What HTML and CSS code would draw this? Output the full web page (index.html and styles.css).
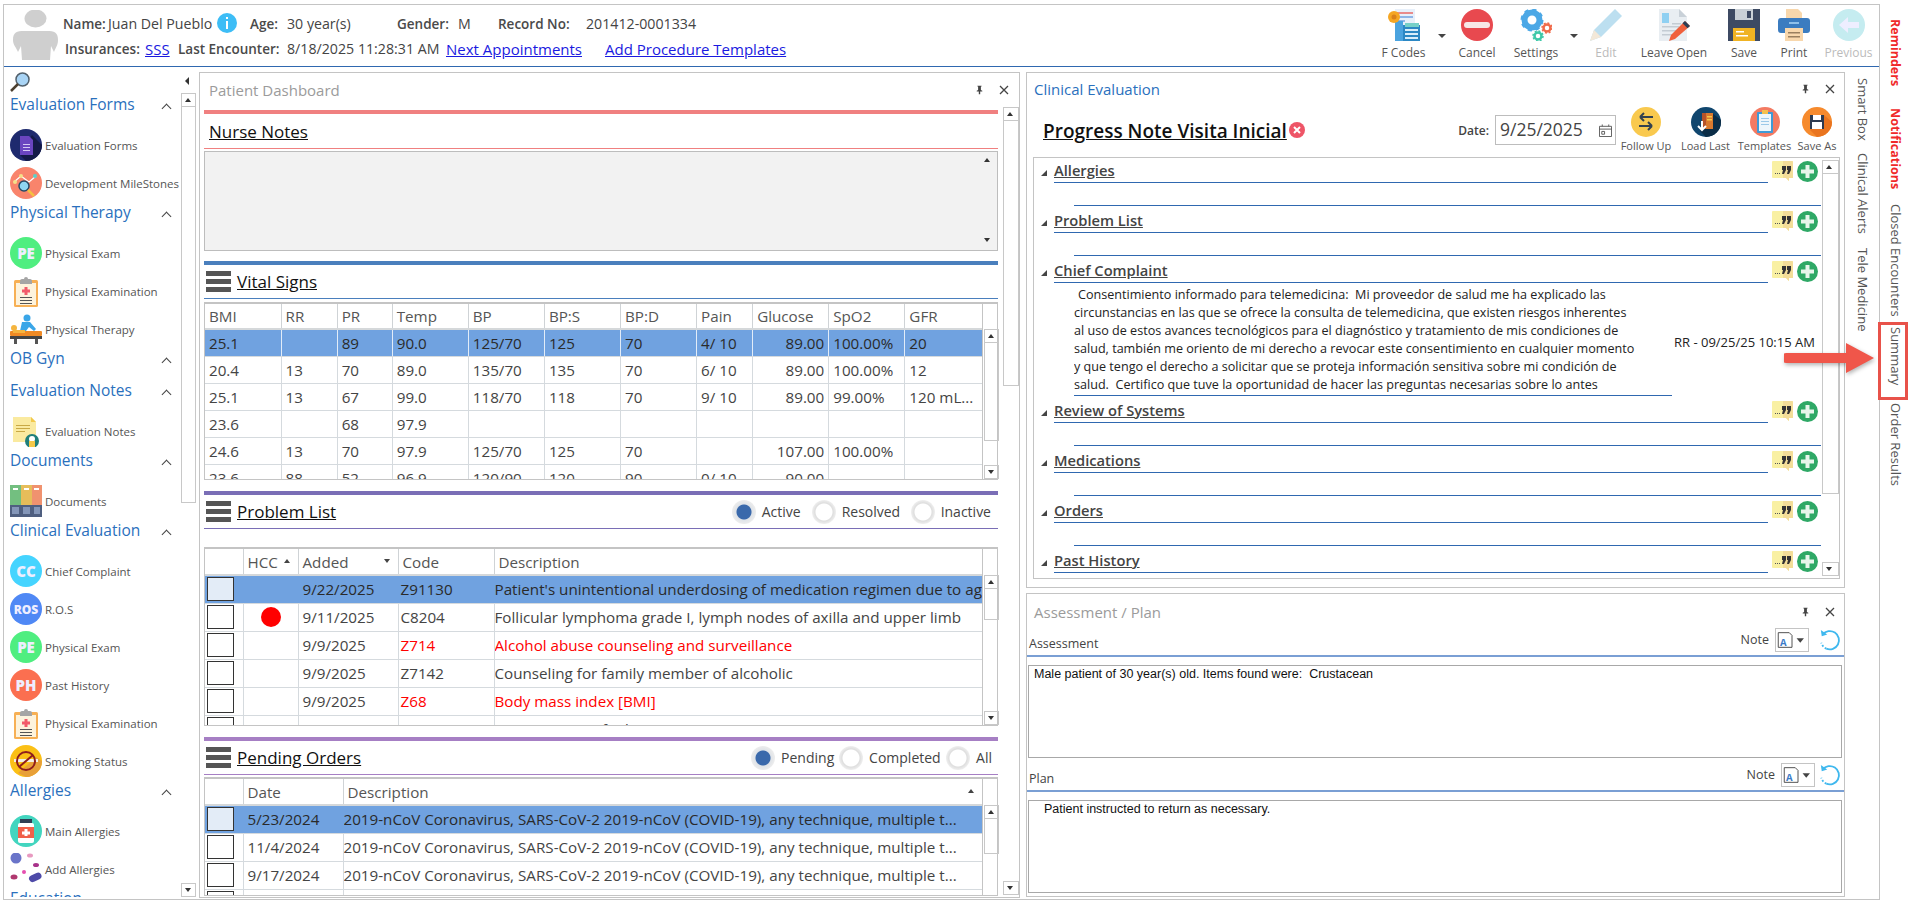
FILE: index.html
```html
<!DOCTYPE html>
<html lang="en">
<head>
<meta charset="utf-8">
<title>Clinical Evaluation</title>
<link rel="stylesheet" href="styles.css">
</head>
<body>
<svg class="defs" width="0" height="0" aria-hidden="true">
  <symbol id="burger" viewBox="0 0 25 21"><rect y="0" width="25" height="5" fill="#555"/><rect y="8" width="25" height="5" fill="#555"/><rect y="16" width="25" height="5" fill="#555"/></symbol>
  <symbol id="quote" viewBox="0 0 21 21"><path d="M0 1a1 1 0 0 1 1-1h19a1 1 0 0 1 1 1v16h-4v3l-3-3H1a1 1 0 0 1-1-1z" fill="#f9f0a3"/><path d="M11 0h9a1 1 0 0 1 1 1v16h-4v3l-3-3h-3z" fill="#f3dd98"/><path d="M3 12h1v1H3zm2 0h1v1H5zm2 0h1v1H7z" fill="#555"/><path d="M10 5h4v4l-2 4h-2l1-4h-1zM15 5h4v4l-2 4h-2l1-4h-1z" fill="#333"/></symbol>
  <symbol id="plus" viewBox="0 0 21 21"><circle cx="10.5" cy="10.5" r="10.5" fill="#2fa866"/><path d="M8.5 4h4v4.500H17v4h-4.500V17h-4v-4.500H4v-4h4.500z" fill="#e8f5ec"/></symbol>
  <symbol id="pin" viewBox="0 0 10 12"><path d="M2 0h6v1H7v5l2 1v1H6v4H4V8H1V7l2-1V1H2z" fill="#444"/></symbol>
  <symbol id="close" viewBox="0 0 10 10"><path d="M1 1l8 8M9 1L1 9" stroke="#444" stroke-width="1.300" fill="none"/></symbol>
  <symbol id="clipboard" viewBox="0 0 32 32"><rect x="4" y="5" width="24" height="27" rx="1.500" fill="#f7b055"/><rect x="6" y="8" width="20" height="22" fill="#fdf3dd"/><path d="M10 6a2 2 0 0 1 2-2h2a2 2 0 0 1 4 0h2a2 2 0 0 1 2 2v3H10z" fill="#a5a5a5"/><path d="M14.500 12h3v2.500H20v3h-2.500V20h-3v-2.500H12v-3h2.500z" fill="#f25b6a"/><path d="M10 22h12v1H10zm0 3h12v1H10zm0 3h12v1H10z" fill="#555"/></symbol>
  <symbol id="noteA" viewBox="0 0 34 24"><path d="M2 4h12l3 3v13H2z" fill="#fff" stroke="#444"/><text x="4" y="18" class="note-a">A</text><path d="M22 10h8l-4 5z" fill="#444"/></symbol>
  <symbol id="refresh" viewBox="0 0 24 24"><path d="M4 6A10 10 0 1 1 8 21.500" fill="none" stroke="#3fb8ee" stroke-width="2"/><path d="M8 21.500A10 10 0 0 1 2.500 15" fill="none" stroke="#3fb8ee" stroke-width="2" stroke-dasharray="2 2"/><path d="M2 1l1 7 6-2z" fill="#3fb8ee"/></symbol>
</svg>
<div class="app">
  <div class="main">
    <header class="head">
      <svg class="avatar" viewBox="0 0 45 50"><ellipse cx="22.500" cy="8.500" rx="11" ry="9" fill="#cfcfcf"/><path d="M0 30c0-8 4-9 11-9h23c7 0 11 1 11 9 0 5-2 7-4 12l-3-6-1 14H9L8 36l-3 6c-2-5-5-7-5-12z" fill="#cfcfcf"/></svg>
      <div class="demo">
        <div class="demo-row">
          <b class="f w45">Name:</b><span class="f w109">Juan Del Pueblo</span>
          <svg class="info" viewBox="0 0 20 20"><circle cx="10" cy="10" r="10" fill="#3dbdf6"/><rect x="9" y="8" width="2" height="8" fill="#fff"/><rect x="9" y="4" width="2" height="2" fill="#fff"/></svg>
          <b class="f w37 ml13">Age:</b><span class="f w110">30 year(s)</span>
          <b class="f w61">Gender:</b><span class="f w40">M</span>
          <b class="f w88">Record No:</b><span class="f">201412-0001334</span>
        </div>
        <div class="demo-row row2">
          <b class="f w80">Insurances:</b><a class="f w33" href="#">SSS</a>
          <b class="f w109">Last Encounter:</b><span class="f w159">8/18/2025 11:28:31 AM</span>
          <a class="f w159" href="#">Next Appointments</a><a class="f" href="#">Add Procedure Templates</a>
        </div>
      </div>
      <nav class="tools">
        <div class="tool w65"><svg viewBox="0 0 32 32"><rect x="7" y="0" width="20" height="26" fill="#e8f0fa"/><path d="M9 3h16v2H9z" fill="#e98b8b"/><path d="M9 7h16v2H9zm0 4h8v2H9z" fill="#8fb6e8"/><rect x="7" y="12" width="8" height="20" fill="#4aa3df"/><rect x="15" y="16" width="17" height="16" fill="#2c88c4"/><rect x="17" y="14" width="14" height="4" fill="#76d0c8"/><path d="M17 20h13v2H17zm0 4h13v2H17zm0 4h13v2H17z" fill="#d8eefb"/><circle cx="6" cy="8" r="6" fill="#f5a623"/><circle cx="6" cy="8" r="2.500" fill="#d9801b"/></svg><span>F Codes</span></div>
        <div class="caret-slot w12"><i class="caret"></i></div>
        <div class="tool w58"><svg viewBox="0 0 32 32"><circle cx="16" cy="16" r="16" fill="#e8494f"/><rect x="3" y="13" width="26" height="6" rx="3" fill="#f7e7e7"/></svg><span>Cancel</span></div>
        <div class="tool w60"><svg viewBox="0 0 32 32"><circle cx="12" cy="11" r="7.500" fill="none" stroke="#4ca8e6" stroke-width="6"/><circle cx="12" cy="11" r="10" fill="none" stroke="#4ca8e6" stroke-width="3" stroke-dasharray="4 3.850"/><circle cx="27" cy="19" r="3.500" fill="none" stroke="#f06a4a" stroke-width="2.500"/><circle cx="27" cy="19" r="5" fill="none" stroke="#f06a4a" stroke-width="1.500" stroke-dasharray="2 1.900"/><circle cx="18" cy="27" r="3.500" fill="none" stroke="#3ec8a8" stroke-width="2.500"/><circle cx="18" cy="27" r="5" fill="none" stroke="#3ec8a8" stroke-width="1.500" stroke-dasharray="2 1.900"/></svg><span>Settings</span></div>
        <div class="caret-slot w16"><i class="caret"></i></div>
        <div class="tool w48 off"><svg viewBox="0 0 32 32"><path d="M25 0l7 7L11 28 0 32l4-11z" fill="#bcdff0"/><path d="M4 21l7 7-11 4z" fill="#f3e8d8"/></svg><span>Edit</span></div>
        <div class="tool w88"><svg viewBox="0 0 32 32"><path d="M1 0h20l8 8v24H1z" fill="#e9eef2"/><path d="M21 0l8 8h-8z" fill="#c9d1d8"/><rect x="4" y="4" width="7" height="10" fill="#8fd0f2"/><path d="M4 17h17v1.500H4zm0 4h14v1.500H4zm0 4h10v1.500H4zm10-11h9v1.500h-9z" fill="#c4ccd3"/><path d="M27 12l5 5-15 13-6 2 2-6z" fill="#f0603c"/><path d="M27 12l5 5-2.500 2.200-5-5z" fill="#2e3f55"/></svg><span>Leave Open</span></div>
        <div class="tool w52"><svg viewBox="0 0 32 32"><path d="M0 0h32v32H0z" fill="#3d4a63"/><rect x="7" y="0" width="18" height="11" fill="#c9d0d6"/><rect x="19" y="2" width="4" height="7" fill="#3d4a63"/><rect x="5" y="19" width="22" height="13" fill="#f0b323"/><path d="M8 22h8v1.500H8zm0 4h12v1.500H8z" fill="#fff"/></svg><span>Save</span></div>
        <div class="tool w48"><svg viewBox="0 0 32 32"><path d="M8 0h12l4 4v10H8z" fill="#f8d7ac"/><rect x="0" y="9" width="32" height="15" rx="3" fill="#3b7cc0"/><rect x="11" y="13" width="10" height="2" fill="#8fc0ea"/><rect x="7" y="19" width="18" height="13" fill="#f8d7ac"/><path d="M10 23h12v1.500H10zm0 4h12v1.500H10z" fill="#9a7f5f"/></svg><span>Print</span></div>
        <div class="tool w61 off"><svg viewBox="0 0 32 32"><circle cx="16" cy="16" r="16" fill="#c5ecf0"/><path d="M6 16l9-8v5h11v6H15v5z" fill="#eef" /></svg><span>Previous</span></div>
      </nav>
    </header>
    <div class="body">
      <aside class="side">
        <div class="side-list">
          <div class="search"><svg viewBox="0 0 20 20"><circle cx="12.500" cy="7.500" r="6.500" fill="#a9d4f5" stroke="#52616d" stroke-width="1.500"/><path d="M8 12l-7 7" stroke="#4d4030" stroke-width="2.500"/></svg></div>
          <section class="side-sec"><h3>Evaluation Forms</h3><ul>
            <li><svg viewBox="0 0 32 32"><circle cx="16" cy="16" r="16" fill="#1e2a6e"/><path d="M16 32a16 16 0 0 0 16-16L22 6 10 26z" fill="#141a48"/><path d="M10 7h9l4 4v15H10z" fill="#6a45c0"/><path d="M13 15h7v1h-7zm0 3h7v1h-7zm0 3h7v1h-7z" fill="#d5c9f3"/></svg>Evaluation Forms</li>
            <li><svg viewBox="0 0 32 32"><circle cx="16" cy="16" r="16" fill="#f9846c"/><path d="M4 15l7-6 8 6 7-6" fill="none" stroke="#fff" stroke-width="1.200"/><circle cx="5" cy="15" r="2" fill="#f5e08a"/><circle cx="11" cy="9" r="2" fill="#f5e08a"/><circle cx="25" cy="9" r="2" fill="#5bd0c8"/><circle cx="14" cy="19" r="5" fill="#8fd6f2" stroke="#274a66" stroke-width="1.500"/><path d="M18 23l6 6" stroke="#f5c043" stroke-width="2.500"/></svg>Development MileStones</li>
          </ul></section>
          <section class="side-sec"><h3>Physical Therapy</h3><ul>
            <li><span class="badge pe">PE</span>Physical Exam</li>
            <li><svg><use href="#clipboard"/></svg>Physical Examination</li>
            <li><svg viewBox="0 0 32 32"><circle cx="17" cy="5" r="3.500" fill="#3aa6e8"/><path d="M12 9h8l6 7-2 2-5-4-3 4h-6z" fill="#3aa6e8"/><rect x="0" y="18" width="32" height="5" rx="1" fill="#f08a24"/><circle cx="4" cy="15" r="3" fill="#f5b53f"/><path d="M3 17h12v3H3z" fill="#f5b53f"/><rect x="0" y="23" width="32" height="3" fill="#444"/><path d="M4 26h3v5H4zm21 0h3v5h-3z" fill="#555"/></svg>Physical Therapy</li>
          </ul></section>
          <section class="side-sec"><h3>OB Gyn</h3></section>
          <section class="side-sec"><h3>Evaluation Notes</h3><ul>
            <li><svg viewBox="0 0 32 32"><path d="M3 2h18l5 5v20H3z" fill="#faeaa0"/><path d="M21 2l5 5h-5z" fill="#f2c84b"/><path d="M6 10h14v1H6zm0 3h14v1H6zm0 3h9v1H6z" fill="#c9a945"/><circle cx="22" cy="26" r="7" fill="#1f7f7a"/><circle cx="22" cy="24" r="3" fill="#fff"/><rect x="19" y="26" width="6" height="6" fill="#f5c94a"/></svg>Evaluation Notes</li>
          </ul></section>
          <section class="side-sec"><h3>Documents</h3><ul>
            <li><svg viewBox="0 0 32 32"><rect x="0" y="0" width="11" height="32" fill="#73bf80"/><rect x="11" y="0" width="11" height="32" fill="#e6bd5a"/><rect x="22" y="0" width="10" height="32" fill="#f0926f"/><rect x="0" y="20" width="32" height="12" fill="#4f5f80"/><path d="M2 22h7v7H2zm11 0h7v7h-7zm11 0h6v7h-6z" fill="#8496b8"/><path d="M3 3h5v2H3zm11 0h5v2h-5zm10 0h5v2h-5z" fill="#fff"/></svg>Documents</li>
          </ul></section>
          <section class="side-sec"><h3>Clinical Evaluation</h3><ul>
            <li><span class="badge cc">CC</span>Chief Complaint</li>
            <li><span class="badge ros">ROS</span>R.O.S</li>
            <li><span class="badge pe">PE</span>Physical Exam</li>
            <li><span class="badge ph">PH</span>Past History</li>
            <li><svg><use href="#clipboard"/></svg>Physical Examination</li>
            <li><svg viewBox="0 0 32 32"><circle cx="16" cy="16" r="16" fill="#fbc016"/><path d="M16 32A16 16 0 0 0 32 16l-6-4-18 16z" fill="#e8a038"/><rect x="4" y="14" width="24" height="3" fill="#f4f0e6"/><circle cx="16" cy="16" r="9" fill="none" stroke="#8f1d1d" stroke-width="2"/><path d="M9 22L23 10" stroke="#8f1d1d" stroke-width="2"/></svg>Smoking Status</li>
          </ul></section>
          <section class="side-sec"><h3>Allergies</h3><ul>
            <li><svg viewBox="0 0 32 32"><circle cx="16" cy="16" r="16" fill="#42d5bf"/><rect x="10" y="4" width="12" height="4" fill="#2e3f55"/><rect x="8" y="8" width="16" height="20" rx="2" fill="#fff"/><rect x="8" y="12" width="16" height="11" fill="#f0604a"/><path d="M14.500 14h3v2.500H20v3h-2.500V21h-3v-1.500H12v-3h2.500z" fill="#fff"/></svg>Main Allergies</li>
            <li><svg viewBox="0 0 32 32"><circle cx="6" cy="5" r="5.500" fill="#6a74c9"/><ellipse cx="20" cy="2.500" rx="3" ry="2" fill="#e89ac0"/><ellipse cx="26" cy="12" rx="3" ry="2" fill="#a8328a"/><circle cx="14" cy="19" r="2" fill="#e64fb0"/><ellipse cx="4" cy="24" rx="3.500" ry="2.500" fill="#b0386f"/><rect x="19" y="21" width="13" height="7" rx="3.500" fill="#4e4aa8" transform="rotate(-25 25 25)"/></svg>Add Allergies</li>
          </ul></section>
          <section class="side-sec"><h3>Education</h3></section>
        </div>
        <div class="side-rail">
          <div class="collapse"><i></i></div>
          <div class="vs vs-side"><i class="vs-up"></i><i class="vs-thumb t-side"></i><i class="vs-rest"></i><i class="vs-down"></i></div>
        </div>
      </aside>

      <section class="panel dash">
        <div class="panel-title"><span class="muted">Patient Dashboard</span><svg class="pin"><use href="#pin"/></svg><svg class="close"><use href="#close"/></svg></div>
        <div class="dash-body">
          <div class="dash-main">
            <div class="bar coral"></div>
            <div class="sec-head l-coral"><h2 class="plain">Nurse Notes</h2></div>
            <div class="nurse"><div class="vs vs-flat"><i class="vs-up"></i><i class="vs-rest"></i><i class="vs-down"></i></div></div>

            <div class="bar blue mt10"></div>
            <div class="sec-head l-blue"><svg class="burger"><use href="#burger"/></svg><h2>Vital Signs</h2></div>
            <div class="grid g-vital">
              <div class="grid-clip">
              <table class="t t-vital">
                <colgroup><col class="c76"><col class="c56"><col class="c55"><col class="c76"><col class="c76"><col class="c76"><col class="c76"><col class="c56"><col class="c76"><col class="c76"><col class="c77"></colgroup>
                <thead><tr><th>BMI</th><th>RR</th><th>PR</th><th>Temp</th><th>BP</th><th>BP:S</th><th>BP:D</th><th>Pain</th><th>Glucose</th><th>SpO2</th><th>GFR</th></tr></thead>
                <tbody>
                  <tr class="sel"><td>25.1</td><td></td><td>89</td><td>90.0</td><td>125/70</td><td>125</td><td>70</td><td>4/ 10</td><td class="r">89.00</td><td>100.00%</td><td>20</td></tr>
                  <tr><td>20.4</td><td>13</td><td>70</td><td>89.0</td><td>135/70</td><td>135</td><td>70</td><td>6/ 10</td><td class="r">89.00</td><td>100.00%</td><td>12</td></tr>
                  <tr><td>25.1</td><td>13</td><td>67</td><td>99.0</td><td>118/70</td><td>118</td><td>70</td><td>9/ 10</td><td class="r">89.00</td><td>99.00%</td><td>120 mL...</td></tr>
                  <tr><td>23.6</td><td></td><td>68</td><td>97.9</td><td></td><td></td><td></td><td></td><td></td><td></td><td></td></tr>
                  <tr><td>24.6</td><td>13</td><td>70</td><td>97.9</td><td>125/70</td><td>125</td><td>70</td><td></td><td class="r">107.00</td><td>100.00%</td><td></td></tr>
                  <tr><td>23.6</td><td>88</td><td>52</td><td>96.9</td><td>120/90</td><td>120</td><td>90</td><td>0/ 10</td><td class="r">90.00</td><td></td><td></td></tr>
                </tbody>
              </table>
              </div>
              <div class="grid-side h26"><div class="vs"><i class="vs-up"></i><i class="vs-thumb t-vital-th"></i><i class="vs-rest"></i><i class="vs-down"></i></div></div>
            </div>

            <div class="bar purple mt11"></div>
            <div class="sec-head l-purple"><svg class="burger"><use href="#burger"/></svg><h2>Problem List</h2>
              <div class="radios r-problem"><label class="radio on w80">Active</label><label class="radio w99">Resolved</label><label class="radio">Inactive</label></div>
            </div>
            <div class="grid g-problem">
              <div class="grid-clip">
              <table class="t t-rows">
                <colgroup><col class="c38"><col class="c55"><col class="c100"><col class="c96"><col class="c488"></colgroup>
                <thead><tr><th></th><th>HCC<i class="sort up"></i></th><th>Added<i class="sort down"></i></th><th>Code</th><th>Description</th></tr></thead>
                <tbody>
                  <tr class="sel"><td class="chk"><i></i></td><td></td><td>9/22/2025</td><td>Z91130</td><td class="nw">Patient's unintentional underdosing of medication regimen due to age-related debility</td></tr>
                  <tr><td class="chk"><i></i></td><td class="dot-cell"><i class="dot"></i></td><td>9/11/2025</td><td>C8204</td><td class="nw">Follicular lymphoma grade I, lymph nodes of axilla and upper limb</td></tr>
                  <tr><td class="chk"><i></i></td><td></td><td>9/9/2025</td><td class="red">Z714</td><td class="nw red">Alcohol abuse counseling and surveillance</td></tr>
                  <tr><td class="chk"><i></i></td><td></td><td>9/9/2025</td><td>Z7142</td><td class="nw">Counseling for family member of alcoholic</td></tr>
                  <tr><td class="chk"><i></i></td><td></td><td>9/9/2025</td><td class="red">Z68</td><td class="nw red">Body mass index [BMI]</td></tr>
                  <tr><td class="chk"><i></i></td><td></td><td>9/4/2025</td><td>R509</td><td class="nw">"Fever, unspecified"</td></tr>
                </tbody>
              </table>
              </div>
              <div class="grid-side h27"><div class="vs"><i class="vs-up"></i><i class="vs-thumb t-small"></i><i class="vs-rest"></i><i class="vs-down"></i></div></div>
            </div>

            <div class="bar violet mt11"></div>
            <div class="sec-head l-violet"><svg class="burger"><use href="#burger"/></svg><h2>Pending Orders</h2>
              <div class="radios r-orders"><label class="radio on w88">Pending</label><label class="radio w107">Completed</label><label class="radio">All</label></div>
            </div>
            <div class="grid g-orders">
              <div class="grid-clip">
              <table class="t t-rows">
                <colgroup><col class="c38"><col class="c100"><col class="c639"></colgroup>
                <thead><tr><th></th><th>Date</th><th>Description<i class="sort up"></i></th></tr></thead>
                <tbody>
                  <tr class="sel"><td class="chk"><i></i></td><td>5/23/2024</td><td class="nw">2019-nCoV Coronavirus, SARS-CoV-2 2019-nCoV (COVID-19), any technique, multiple t...</td></tr>
                  <tr><td class="chk"><i></i></td><td>11/4/2024</td><td class="nw">2019-nCoV Coronavirus, SARS-CoV-2 2019-nCoV (COVID-19), any technique, multiple t...</td></tr>
                  <tr><td class="chk"><i></i></td><td>9/17/2024</td><td class="nw">2019-nCoV Coronavirus, SARS-CoV-2 2019-nCoV (COVID-19), any technique, multiple t...</td></tr>
                  <tr><td class="chk"><i></i></td><td></td><td></td></tr>
                </tbody>
              </table>
              </div>
              <div class="grid-side h27"><div class="vs"><i class="vs-up"></i><i class="vs-thumb t-order"></i><i class="vs-rest"></i></div></div>
            </div>
          </div>
          <div class="vs vs-outer"><i class="vs-up"></i><i class="vs-thumb t-outer"></i><i class="vs-rest"></i><i class="vs-down"></i></div>
        </div>
      </section>

      <div class="right-col">
        <section class="panel clinical">
          <div class="panel-title pt-clin"><span class="blue-t">Clinical Evaluation</span><svg class="pin"><use href="#pin"/></svg><svg class="close"><use href="#close"/></svg></div>
          <div class="clin-tools">
            <h1>Progress Note Visita Inicial</h1>
            <svg class="x-c" viewBox="0 0 16 16"><circle cx="8" cy="8" r="8" fill="#ee5567"/><path d="M5 5l6 6M11 5l-6 6" stroke="#fff" stroke-width="2"/></svg>
            <b class="date-l">Date:</b>
            <div class="date"><span>9/25/2025</span><svg viewBox="0 0 14 14"><path d="M.5 2.500h13v11H.5zM.5 5.500h13M3.500.500v2M10.500.500v2M3 8h3v3H3z" fill="none" stroke="#555"/></svg></div>
            <div class="ctool w60"><svg viewBox="0 0 30 30"><circle cx="15" cy="15" r="15" fill="#f9c94e"/><path d="M9 10h13M9 10l4-4M9 10l4 4M21 19H8M21 19l-4-4M21 19l-4 4" fill="none" stroke="#33414f" stroke-width="2"/></svg><span>Follow Up</span></div>
            <div class="ctool w59"><svg viewBox="0 0 30 30"><circle cx="15" cy="15" r="15" fill="#10466e"/><path d="M30 15a15 15 0 0 1-15 15l-6-6 12-18 9 7z" fill="#0b2d47"/><rect x="11" y="6" width="11" height="16" fill="#b5532a"/><rect x="15" y="6" width="7" height="16" fill="#d9792f"/><path d="M16 9h5v1.500h-5zm0 3h5v1.500h-5z" fill="#f5c74a"/><path d="M11 14v8M7 19l4 4 4-4" fill="none" stroke="#fff" stroke-width="2"/></svg><span>Load Last</span></div>
            <div class="ctool w59"><svg viewBox="0 0 30 30"><circle cx="15" cy="15" r="15" fill="#f37a62"/><rect x="7" y="5" width="16" height="21" rx="1" fill="#3f9ad6"/><rect x="9" y="7" width="12" height="17" fill="#eef6fb"/><rect x="12" y="3" width="6" height="4" fill="#f4c04e"/><path d="M11 11h8v1h-8zm0 3h8v1h-8zm0 3h8v1h-8z" fill="#9cc9e8"/></svg><span>Templates</span></div>
            <div class="ctool w46"><svg viewBox="0 0 30 30"><circle cx="15" cy="15" r="15" fill="#f68a2d"/><path d="M30 15a15 15 0 0 1-15 15l-7-7 14-15 8 7z" fill="#e9741f"/><rect x="8" y="8" width="14" height="14" fill="#2d3a4f"/><rect x="11" y="8" width="8" height="5" fill="#fff"/><rect x="10" y="15" width="10" height="7" fill="#fff"/></svg><span>Save As</span></div>
          </div>
          <div class="eval">
            <div class="eval-list">
              <div class="es"><div class="es-head"><i class="tri"></i><h4>Allergies</h4><svg class="q"><use href="#quote"/></svg><svg class="p"><use href="#plus"/></svg></div><div class="es-body"></div></div>
              <div class="es"><div class="es-head"><i class="tri"></i><h4>Problem List</h4><svg class="q"><use href="#quote"/></svg><svg class="p"><use href="#plus"/></svg></div><div class="es-body"></div></div>
              <div class="es"><div class="es-head"><i class="tri"></i><h4>Chief Complaint</h4><svg class="q"><use href="#quote"/></svg><svg class="p"><use href="#plus"/></svg></div>
                <div class="es-text">
                  <p><span class="lead">Consentimiento informado para telemedicina:&nbsp; Mi proveedor de salud me ha explicado las</span><br>circunstancias en las que se ofrece la consulta de telemedicina, que existen riesgos inherentes<br>al uso de estos avances tecnológicos para el diagnóstico y tratamiento de mis condiciones de<br>salud, también me oriento de mi derecho a revocar este consentimiento en cualquier momento<br>y que tengo el derecho a solicitar que se proteja información sensitiva sobre mi condición de<br>salud.&nbsp; Certifico que tuve la oportunidad de hacer las preguntas necesarias sobre lo antes</p>
                  <span class="rr">RR - 09/25/25 10:15 AM</span>
                </div></div>
              <div class="es"><div class="es-head"><i class="tri"></i><h4>Review of Systems</h4><svg class="q"><use href="#quote"/></svg><svg class="p"><use href="#plus"/></svg></div><div class="es-body"></div></div>
              <div class="es"><div class="es-head"><i class="tri"></i><h4>Medications</h4><svg class="q"><use href="#quote"/></svg><svg class="p"><use href="#plus"/></svg></div><div class="es-body"></div></div>
              <div class="es"><div class="es-head"><i class="tri"></i><h4>Orders</h4><svg class="q"><use href="#quote"/></svg><svg class="p"><use href="#plus"/></svg></div><div class="es-body"></div></div>
              <div class="es"><div class="es-head"><i class="tri"></i><h4>Past History</h4><svg class="q"><use href="#quote"/></svg><svg class="p"><use href="#plus"/></svg></div></div>
            </div>
            <div class="vs vs-eval"><i class="vs-up"></i><i class="vs-thumb t-eval"></i><i class="vs-rest"></i><i class="vs-down"></i></div>
          </div>
        </section>
        <section class="panel assess">
          <div class="panel-title pt-assess"><span class="muted">Assessment / Plan</span><svg class="pin"><use href="#pin"/></svg><svg class="close"><use href="#close"/></svg></div>
          <div class="ap-head"><span class="ap-l">Assessment</span><span class="note-l">Note</span><svg class="note-b"><use href="#noteA"/></svg><svg class="ref r-a"><use href="#refresh"/></svg></div>
          <div class="ap-box">Male patient of 30 year(s) old. Items found were:&nbsp; Crustacean</div>
          <div class="ap-head h-plan"><span class="ap-l">Plan</span><span class="note-l">Note</span><svg class="note-b"><use href="#noteA"/></svg><svg class="ref"><use href="#refresh"/></svg></div>
          <div class="ap-box b-plan">Patient instructed to return as necessary.</div>
        </section>
      </div>

      <div class="strip">
        <span class="vt h75">Smart Box</span><span class="vt h95">Clinical Alerts</span><span class="vt">Tele Medicine</span>
      </div>
    </div>
  </div>
  <div class="tabs">
    <span class="vt alert h89">Reminders</span><span class="vt alert h96">Notifications</span><span class="vt h123">Closed Encounters</span><span class="vt h76">Summary</span><span class="vt">Order Results</span>
  </div>
  <div class="callout"></div>
  <svg class="arrow" viewBox="0 0 92 32"><path d="M2 11h60V1l28 15-28 15V21H2a5 5 0 0 1 0-10z" fill="#f0564a"/></svg>
</div>
</body>
</html>
```
FILE: styles.css
```css
* { box-sizing: border-box; }
html, body { margin: 0; padding: 0; height: 100%; overflow: hidden; background: #fff; }
body { font-family: "Open Sans", "Noto Sans", sans-serif; color: #444; font-size: 14px; }
.defs { position: absolute; }
ul { list-style: none; margin: 0; padding: 0; }
h1, h2, h3, h4, p { margin: 0; }
i { display: block; font-style: normal; }

.app { position: relative; width: 1911px; height: 902px; display: flex; padding: 4px 0 2px 3px; }
.main { width: 1877px; height: 896px; border: 1px solid #c4c4c4; display: flex; flex-direction: column; }

/* header */
.head { height: 62px; flex: none; border-bottom: 1px solid #2f68b0; display: flex; align-items: flex-start; position: relative; }
.avatar { width: 45px; height: 50px; margin: 5px 0 0 9px; flex: none; }
.demo { margin-left: 5px; padding-top: 7px; }
.demo-row { display: flex; align-items: center; height: 23px; white-space: nowrap; font-size: 14.200px; }
.demo-row b { font-weight: 600; color: #4a4a4a; font-size: 13.500px; }
.row2 { margin-top: 2px; margin-left: 2px; }
.f { display: block; flex: none; }
.demo a { color: #1a1ae0; text-decoration: underline; font-size: 15px; }
.info { width: 20px; height: 20px; flex: none; margin-top: -2px; }
.w33 { width: 33px; } .w37 { width: 37px; } .w40 { width: 40px; } .w45 { width: 45px; } .w46 { width: 46px; } .w48 { width: 48px; }
.w52 { width: 52px; } .w58 { width: 58px; } .w59 { width: 59px; } .w60 { width: 60px; } .w61 { width: 61px; } .w65 { width: 65px; }
.w80 { width: 80px; } .w88 { width: 88px; } .w109 { width: 109px; } .w110 { width: 110px; } .w159 { width: 159px; }
.w12 { width: 12px; } .w16 { width: 16px; } .w99 { width: 99px; } .w107 { width: 107px; }
.ml13 { margin-left: 13px; }
.tools { margin-left: auto; display: flex; height: 61px; }
.tool { display: flex; flex-direction: column; align-items: center; padding-top: 4px; font-size: 12px; color: #555; white-space: nowrap; }
.tool svg { width: 32px; height: 32px; flex: none; }
.tool span { margin-top: 3px; line-height: 17px; }
.tool.off { color: #bbb; }
.caret-slot { padding-top: 29px; display: flex; justify-content: center; }
.caret { width: 0; height: 0; border: 4px solid transparent; border-top: 4px solid #444; border-bottom: 0; }

/* body row */
.body { flex: 1; display: flex; min-height: 0; padding-top: 5px; }

/* sidebar */
.side { width: 195px; flex: none; display: flex; margin-top: -5px; padding-bottom: 2px; }
.side-list { width: 177px; flex: none; overflow: hidden; padding-left: 6px; }
.search { height: 22px; padding-top: 5px; }
.search svg { width: 20px; height: 20px; display: block; }
.side-sec h3 { height: 32px; line-height: 30px; font-weight: 400; font-size: 15.500px; color: #2a70bd; white-space: nowrap; position: relative; }
.side-sec h3::after { content: ""; position: absolute; left: 153px; top: 16px; width: 6px; height: 6px; border-left: 1.500px solid #444; border-top: 1.500px solid #444; transform: rotate(45deg); }
.side-sec ul { display: flex; flex-direction: column; gap: 6px; margin: 8px 0 -2px; }
.side-sec li { display: flex; align-items: center; height: 32px; font-size: 11.500px; white-space: nowrap; color: #555; }
.side-sec li svg, .badge { width: 32px; height: 32px; flex: none; margin-right: 3px; display: block; }
.badge { border-radius: 50%; color: #eef; font-weight: 800; font-size: 15px; display: flex; align-items: center; justify-content: center; }
.pe { background: #4fee80; } .cc { background: #45d4ff; } .ros { background: #4f88f5; font-size: 12px; } .ph { background: #fb6f50; }
.side-rail { width: 18px; flex: none; display: flex; flex-direction: column; }
.collapse { height: 26px; position: relative; flex: none; }
.collapse i { position: absolute; left: 4px; top: 10px; width: 0; height: 0; border: 4px solid transparent; border-right: 4px solid #333; border-left: 0; }

/* scrollbars */
.vs { width: 15px; display: flex; flex-direction: column; flex: 1; }
.vs-up, .vs-down { height: 14px; flex: none; position: relative; border: 1px solid #c8c8c8; }
.vs-up::after, .vs-down::after { content: ""; position: absolute; left: 3px; top: 4px; width: 0; height: 0; border: 3.500px solid transparent; }
.vs-up::after { border-bottom: 4px solid #333; border-top: 0; }
.vs-down::after { border-top: 4px solid #333; border-bottom: 0; }
.vs-thumb { flex: none; border: 1px solid #c8c8c8; border-top: 0; }
.vs-rest { flex: 1; }
.t-side { height: 396px; }
.t-vital-th { height: 98px; }
.t-small { height: 31px; }
.t-order { height: 35px; }
.t-outer { height: 265px; }
.t-eval { height: 320px; }
.vs-flat { margin-left: auto; flex: none; height: 100%; padding: 2px 0; }
.vs-flat .vs-up, .vs-flat .vs-down { border: 0; }

/* panels */
.panel { border: 1px solid #c4c4c4; background: #fff; display: flex; flex-direction: column; }
.panel-title { display: flex; align-items: center; font-size: 15px; position: relative; flex: none; }
.muted { color: #9b9b9b; }
.blue-t { color: #2a70bd; }
.pin { width: 7px; height: 10px; margin-left: auto; }
.close { width: 10px; height: 10px; margin-left: 16px; }

.dash { width: 821px; height: 826px; flex: none; }
.dash .panel-title { height: 37px; padding: 0 10px 4px 9px; }
.dash-body { display: flex; flex: 1; min-height: 0; padding-left: 4px; }
.dash-main { width: 794px; flex: none; }
.vs-outer { width: 16px; margin-left: 5px; padding-bottom: 2px; }
.vs-outer .vs-up { margin-top: -3px; }
.bar { height: 4px; }
.coral { background: #f08080; } .blue { background: #4a7fbd; } .purple { background: #7a6eb6; } .violet { background: #a67fc4; }
.mt10 { margin-top: 10px; } .mt11 { margin-top: 11px; }
.sec-head { height: 34px; display: flex; align-items: center; padding-left: 2px; border-bottom: 1px solid; }
.l-coral { border-color: #f08080; height: 35px; }
.l-blue { border-color: #4a7fbd; } .l-purple { border-color: #7a6eb6; } .l-violet { border-color: #a67fc4; }
.sec-head h2 { font-size: 17px; font-weight: 400; color: #111; text-decoration: underline; }
.sec-head h2.plain { margin-left: 3px; }
.burger { width: 25px; height: 21px; margin-right: 6px; flex: none; }
.nurse { height: 100px; margin-top: 2px; background: #f2f2f2; border: 1px solid #bdbdbd; display: flex; padding-right: 1px; }

.radios { margin-left: auto; display: flex; font-size: 14px; color: #444; }
.r-problem { margin-right: 7px; }
.r-orders { margin-right: 6px; }
.radio { display: flex; align-items: center; height: 24px; white-space: nowrap; }
.radio::before { content: ""; width: 24px; height: 24px; margin-right: 6px; border-radius: 50%; flex: none; background: radial-gradient(circle, #fff 0 8px, #dedede 9px, #efefef 12px); }
.radio.on::before { background: radial-gradient(circle, #3a69ab 0 7px, #dfe3e8 8px, #ededed 12px); }

/* grids */
.grid { display: flex; border: 1px solid #c4c4c4; border-top-width: 2px; }
.g-vital { height: 178px; margin-top: 3px; }
.g-problem { height: 179px; margin-top: 18px; }
.g-orders { height: 119px; margin-top: 2px; }
.grid-clip { width: 777px; flex: none; overflow: hidden; }
.grid-side { flex: 1; display: flex; flex-direction: column; border-left: 1px solid #c4c4c4; padding-left: 1px; }
.h26 { padding-top: 25px; } .h27 { padding-top: 26px; }
.t { border-collapse: collapse; table-layout: fixed; width: 777px; font-size: 15.200px; color: #444; }
.c76 { width: 76px; } .c56 { width: 56px; } .c55 { width: 55px; } .c77 { width: 77px; } .c38 { width: 38px; } .c100 { width: 100px; } .c96 { width: 96px; } .c488 { width: 488px; } .c639 { width: 639px; }
.t th { font-weight: 400; text-align: left; padding: 0 4px; height: 25px; border-right: 1px solid #cfd3d6; border-bottom: 2px solid #d5d8da; position: relative; color: #555; }
.t td { height: 27px; padding: 0 4px; border-right: 1px solid #d5dade; border-bottom: 1px solid #d5dade; white-space: nowrap; overflow: hidden; }
.t-rows th { height: 26px; }
.t-rows td { height: 28px; }
.t th:last-child, .t td:last-child { border-right: 0; }
.t .r { text-align: right; }
.t .nw { padding-left: 0; padding-right: 0; }
.t .red { color: #f00; }
.t-rows td:nth-child(4) { padding-left: 2px; }
.sel td { background: #70a2e0; border-right-color: #e2ecf8; color: #2a2a2a; }
.t-rows .sel td { border-right-color: #70a2e0; }
.chk { padding: 0 0 0 2px !important; }
.chk i { width: 27px; height: 24px; border: 1px solid #333; background: #fff; }
.sel .chk i { background: #e3ecf7; }
.dot { width: 20px; height: 20px; border-radius: 50%; background: #f00; margin: 0 auto; }
.dot-cell { padding: 0 !important; }
.sort { position: absolute; right: 8px; top: 10px; width: 0; height: 0; border: 3.500px solid transparent; }
.sort.up { border-bottom: 4px solid #444; border-top: 0; }
.sort.down { border-top: 4px solid #444; border-bottom: 0; }

/* right column */
.right-col { width: 819px; margin-left: 6px; flex: none; display: flex; flex-direction: column; gap: 5px; }
.clinical { height: 516px; flex: none; padding: 0 4px 0 6px; }
.pt-clin { height: 34px; padding-left: 1px; padding-right: 5px; padding-bottom: 2px; }
.pt-assess { height: 35px; padding-left: 7px; padding-right: 9px; }
.clin-tools { height: 50px; display: flex; align-items: flex-start; flex: none; padding-left: 10px; }
.clin-tools h1 { font-size: 19px; font-weight: 600; color: #111; text-decoration: underline; white-space: nowrap; margin-top: 9px; line-height: 30px; }
.x-c { width: 16px; height: 16px; margin: 15px 0 0 2px; flex: none; }
.date-l { margin: 15px 6px 0 auto; font-size: 12px; font-weight: 600; }
.date { width: 121px; height: 30px; margin-top: 8px; border: 1px solid #bdbdbd; display: flex; align-items: center; padding: 0 3px 0 4px; font-size: 17.500px; color: #444; flex: none; }
.date svg { width: 13px; height: 13px; margin-left: auto; }
.date span { line-height: 1; }
.ctool { display: flex; flex-direction: column; align-items: center; font-size: 11px; color: #555; white-space: nowrap; flex: none; }
.ctool svg { width: 30px; height: 30px; flex: none; }
.ctool span { line-height: 17px; margin-top: 0; }
.eval { height: 422px; flex: none; border: 1px solid #c4c4c4; display: flex; overflow: hidden; padding-left: 7px; }
.eval-list { width: 780px; flex: none; padding-top: 2px; }
.es { margin-bottom: 4px; }
.es-head { height: 23px; display: flex; align-items: center; }
.tri { width: 0; height: 0; border-left: 6px solid transparent; border-bottom: 6px solid #444; flex: none; margin: 2px 7px 0 0; }
.es h4 { width: 714px; flex: none; height: 23px; border-bottom: 1px solid #2f68b0; font-size: 14.700px; font-weight: 600; color: #444; line-height: 21px; text-decoration: underline; }
.q { width: 21px; height: 21px; margin: 0 0 0 4px; flex: none; }
.p { width: 21px; height: 21px; margin-left: 4px; flex: none; }
.es-body { height: 23px; margin-left: 33px; border-bottom: 1px solid #2f68b0; }
.es-text { margin-left: 33px; height: 113px; display: flex; align-items: center; }
.es-text p { width: 598px; flex: none; height: 113px; padding-top: 3px; border-bottom: 1px solid #2f68b0; font-size: 12.600px; line-height: 18px; color: #222; white-space: nowrap; overflow: hidden; }
.lead { padding-left: 4px; }
.rr { margin: 5px 0 0 2px; font-size: 13px; color: #222; white-space: nowrap; }
.vs-eval { margin: 2px 0 2px 1px; }

.assess { height: 304px; flex: none; }
.ap-head { height: 28px; display: flex; align-items: center; padding: 0 2px 0 1px; border-bottom: 2px solid #7a9fd4; font-size: 12.500px; flex: none; }
.h-plan { height: 34px; }
.ap-l { align-self: flex-end; line-height: 20px; margin-bottom: 1px; color: #444; margin-left: 1px; }
.note-l { margin-left: auto; margin-top: -5px; }
.note-b { width: 34px; height: 24px; border: 1px solid #c4c4c4; margin: -5px 0 0 6px; flex: none; }
.note-a { font-size: 12px; font-weight: 700; fill: #3a7bc8; font-family: "Liberation Mono", monospace; }
.ref { width: 22px; height: 24px; margin: -5px 1px 0 4px; flex: none; }
.r-a { margin-left: 10px; }
.h-plan .note-l, .h-plan .note-b, .h-plan .ref { margin-top: 1px; }
.ap-box { height: 93px; margin: 8px 2px 0 1px; border: 1px solid #a8a8a8; padding: 1px 5px; font-family: "Liberation Sans", Arial, sans-serif; font-size: 12.500px; color: #111; flex: none; white-space: nowrap; }
.b-plan { padding-left: 15px; }

/* vertical tabs */
.vt { writing-mode: vertical-rl; white-space: nowrap; font-size: 13px; color: #555; flex: none; display: block; }
.strip { flex: 1; display: flex; flex-direction: column; align-items: center; padding-top: 6px; margin-left: 1px; }
.tabs { width: 31px; flex: none; display: flex; flex-direction: column; align-items: center; padding-top: 15px; }
.alert { color: #f02a2a; font-weight: 700; font-size: 12.500px; }
.h75 { height: 75px; } .h95 { height: 95px; } .h89 { height: 89px; } .h96 { height: 96px; } .h123 { height: 123px; } .h76 { height: 76px; }

/* annotation */
.callout { position: absolute; left: 1878px; top: 322px; width: 30px; height: 78px; border: 3px solid #e8524a; }
.arrow { position: absolute; left: 1784px; top: 342px; width: 92px; height: 32px; filter: drop-shadow(1px 2px 2px rgba(0,0,0,.3)); }
```
